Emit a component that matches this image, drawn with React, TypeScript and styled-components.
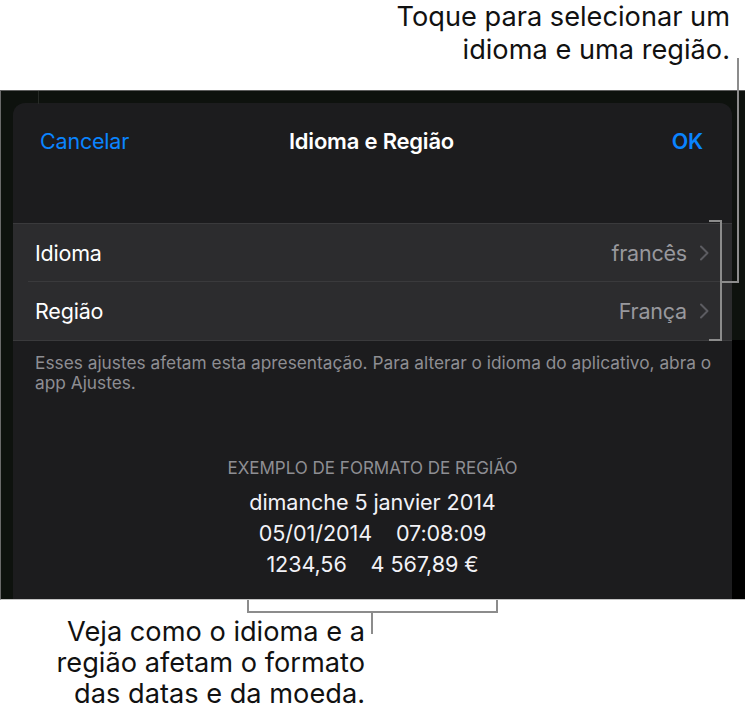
import React from 'react';
import styled, { createGlobalStyle } from 'styled-components';

const GlobalStyle = createGlobalStyle`
  html, body {
    margin: 0;
    padding: 0;
    background: #ffffff;
  }
  body {
    font-family: Inter, "Noto Sans", "Liberation Sans", sans-serif;
    -webkit-font-smoothing: antialiased;
  }
`;

const Page = styled.div`
  position: relative;
  width: 745px;
  height: 726px;
  overflow: hidden;
  background: #ffffff;
`;

const Callout = styled.div<{ $right: number; $top: number; $lh: number }>`
  padding-top: ${p => p.$top}px;
  padding-right: ${p => p.$right}px;
  text-align: right;
  font-size: 27.2px;
  font-weight: 400;
  line-height: ${p => p.$lh}px;
  color: #111111;
  white-space: nowrap;
`;

const TopArea = styled.div`
  height: 90px;
`;

const Screen = styled.div`
  position: relative;
  display: flex;
  height: 508px;
  border-top: 1px solid #5e5e5e;
  border-left: 1px solid #6a6a6a;
  border-bottom: 1px solid #c4c4c4;
  background: #0e120e;
  overflow: hidden;

  &::before {
    content: '';
    position: absolute;
    left: 37px;
    top: 0;
    width: 1px;
    height: 13px;
    background: #262a26;
  }
`;

const Gutter = styled.div`
  width: 12px;
  flex-shrink: 0;
`;

const RightStrip = styled.div`
  flex: 1;
  background: linear-gradient(to bottom, transparent 0, transparent 249px, #000 249px);
`;

const Sheet = styled.div`
  width: 719px;
  flex-shrink: 0;
  margin-top: 12px;
  background: #1c1c1e;
  border-radius: 12px 12px 0 0;
  display: flex;
  flex-direction: column;
`;

const NavBar = styled.div`
  height: 76px;
  display: grid;
  grid-template-columns: 1fr auto 1fr;
  align-items: center;
  padding: 0 29px 0 27px;
`;

const NavButton = styled.span<{ $bold?: boolean; $end?: boolean }>`
  color: #0a84ff;
  font-size: 21.5px;
  font-weight: ${p => (p.$bold ? 600 : 400)};
  letter-spacing: -0.2px;
  justify-self: ${p => (p.$end ? 'end' : 'start')};
`;

const NavTitle = styled.span`
  color: #ffffff;
  font-size: 22px;
  font-weight: 600;
  letter-spacing: -0.2px;
`;

const Group = styled.div`
  margin-top: 44px;
  background: #2c2c2e;
  border-top: 1px solid #3a3a3c;
  border-bottom: 1px solid #3a3a3c;
`;

const Row = styled.div<{ $divider?: boolean }>`
  height: 58px;
  display: flex;
  align-items: center;
  padding: 0 23px 0 22px;
  position: relative;
  ${p => p.$divider ? `
    &::after {
      content: '';
      position: absolute;
      left: 15px;
      right: 0;
      bottom: 0;
      height: 1px;
      background: #3a3a3c;
    }
  ` : ''}
`;

const RowLabel = styled.span`
  flex: 1;
  color: #ffffff;
  font-size: 21.5px;
  letter-spacing: -0.2px;
`;

const RowValue = styled.span`
  color: #98989d;
  font-size: 21.5px;
  letter-spacing: -0.2px;
  margin-right: 12px;
`;

const Note = styled.p`
  margin: 12px 0 0;
  padding: 0 16px 0 22px;
  color: #8e8e93;
  font-size: 17.3px;
  line-height: 20px;
`;

const Example = styled.div`
  margin-top: 65px;
  display: flex;
  flex-direction: column;
  align-items: center;
`;

const ExampleTitle = styled.div`
  color: #8e8e93;
  font-size: 17px;
  line-height: 20px;
  text-transform: uppercase;
  margin-bottom: 9px;
`;

const ExampleLine = styled.div`
  color: #f2f2f7;
  font-size: 21.6px;
  line-height: 30.8px;
  letter-spacing: -0.1px;
  white-space: pre;
`;

const Lines = styled.svg`
  position: absolute;
  left: 0;
  top: 0;
  pointer-events: none;
`;

const Chevron = () => (
  <svg width="10" height="16" viewBox="0 0 10 16">
    <path d="M2 1.5 L8.5 8 L2 14.5" fill="none" stroke="#5c5c61" strokeWidth="2" strokeLinecap="round" strokeLinejoin="round" />
  </svg>
);

const App: React.FC = () => {
  const rows = [
    { label: 'Idioma', value: 'francês' },
    { label: 'Região', value: 'França' },
  ];

  return (
    <Page>
      <GlobalStyle />
      <TopArea>
        <Callout $right={15} $top={0} $lh={33}>
          Toque para selecionar um
          <br />
          idioma e uma região.
        </Callout>
      </TopArea>

      <Screen>
        <Gutter />
        <Sheet>
          <NavBar>
            <NavButton>Cancelar</NavButton>
            <NavTitle>Idioma e Região</NavTitle>
            <NavButton $bold $end>OK</NavButton>
          </NavBar>

          <Group>
            {rows.map((r, i) => (
              <Row key={r.label} $divider={i < rows.length - 1}>
                <RowLabel>{r.label}</RowLabel>
                <RowValue>{r.value}</RowValue>
                <Chevron />
              </Row>
            ))}
          </Group>

          <Note>
            Esses ajustes afetam esta apresentação. Para alterar o idioma do aplicativo, abra o app Ajustes.
          </Note>

          <Example>
            <ExampleTitle>Exemplo de formato de região</ExampleTitle>
            <ExampleLine>dimanche 5 janvier 2014</ExampleLine>
            <ExampleLine>{'05/01/2014    07:08:09'}</ExampleLine>
            <ExampleLine>{'1234,56    4 567,89 €'}</ExampleLine>
          </Example>
        </Sheet>
        <RightStrip />
      </Screen>

      <Callout $right={380} $top={16} $lh={31}>
        Veja como o idioma e a
        <br />
        região afetam o formato
        <br />
        das datas e da moeda.
      </Callout>

      <Lines width="745" height="726" viewBox="0 0 745 726">
        <g fill="none" stroke="#8c8c8c" strokeWidth="2">
          <path d="M738 58 V282 H721" />
          <path d="M709 221 H721 V340 H709" />
          <path d="M248 600 V612 H497 V600" />
          <path d="M372 612 V634" />
        </g>
      </Lines>
    </Page>
  );
};

export default App;
